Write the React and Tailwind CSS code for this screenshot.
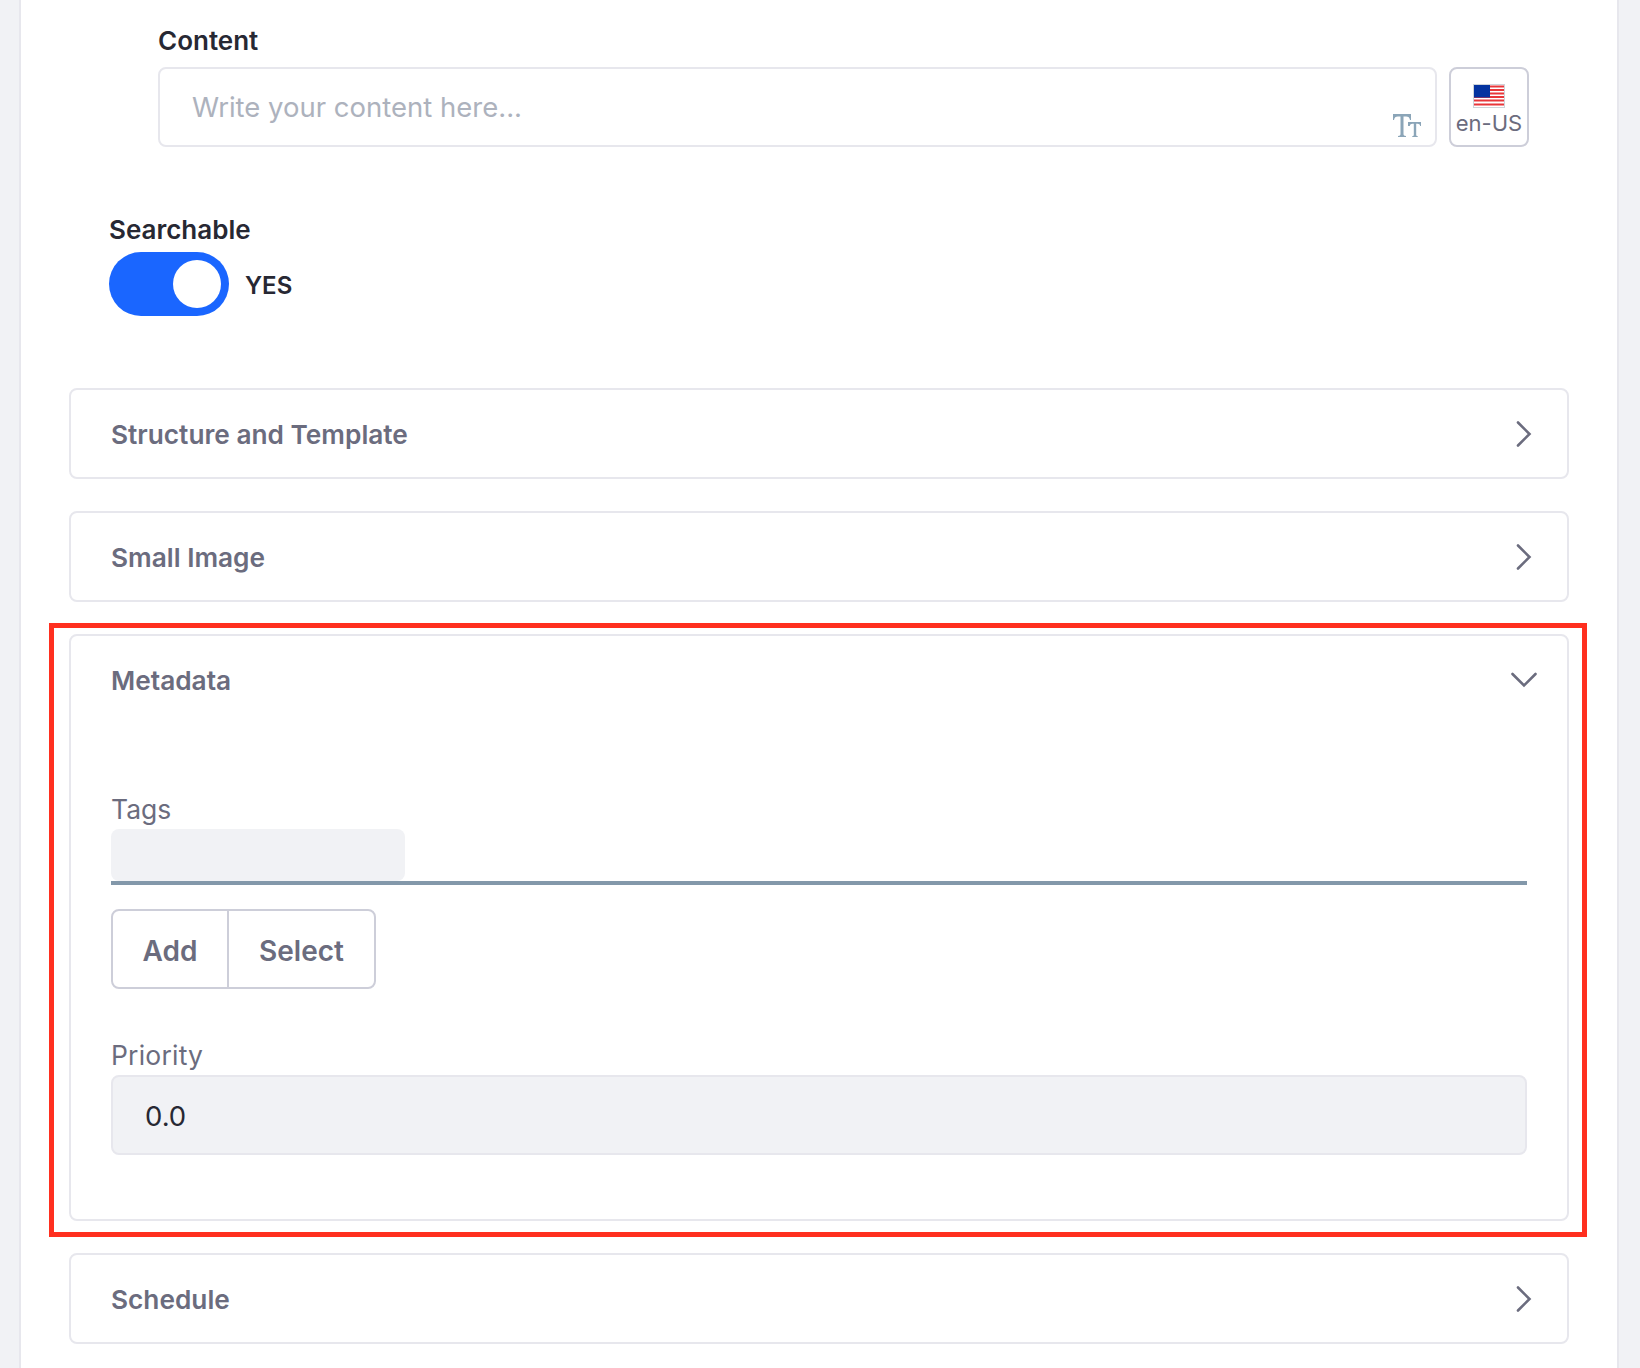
const Chevron = ({ down }) => (
  <svg width="28" height="28" viewBox="0 0 28 28" fill="none" stroke="#6b6c7e" strokeWidth="2.6" strokeLinecap="round" strokeLinejoin="miter">
    {down ? <path d="M2.500 8l11.500 11.500L25.500 8" /> : <path d="M8 2.500L19.500 14 8 25.500" />}
  </svg>
);

const Header = ({ title, down }) => (
  <div className="h-[87px] flex items-center justify-between pl-[40px] pr-[29px]">
    <span className="text-[26.25px] font-semibold text-[#6b6c7e] leading-[32px] mt-[3px]">{title}</span>
    <Chevron down={down} />
  </div>
);

const Panel = ({ title }) => (
  <div className="h-[91px] mb-[32px] border-2 border-[#e7e7ed] rounded-lg flex flex-col justify-center">
    <Header title={title} />
  </div>
);

const Flag = () => (
  <svg width="32" height="24" viewBox="0 0 32 24">
    <rect width="32" height="24" fill="#ced4da" />
    <rect x="1" y="1" width="30" height="22" fill="#fff" />
    <path d="M1 2.500h30M1 6h30M1 9.500h30M1 13h30M1 16.500h30M1 20.500h30" stroke="#e8363a" strokeWidth="1.800" />
    <rect x="1" y="1" width="16" height="12.500" fill="#0433a0" />
  </svg>
);

const TextSize = () => (
  <svg width="28" height="23" viewBox="0 0 28 23" fill="#8ba5b8" className="absolute right-[14px] bottom-[8px]">
    <path d="M0 0h18v6h-1c-.4-2.500-1.500-3.600-4-3.600h-2.500V20c0 1.300.6 1.800 2.500 2v1H5v-1c1.900-.2 2.500-.7 2.500-2V2.400H5C2.500 2.400 1.400 3.500 1 6H0z" />
    <path d="M15 8h13v4h-.8c-.3-1.500-1-2.300-2.700-2.300h-1.300V21c0 .7.400 1 1.600 1.200V23h-5.600v-.8c1.200-.2 1.600-.5 1.600-1.200V9.700h-1.300c-1.700 0-2.400.8-2.700 2.300H15z" />
  </svg>
);

export default function App() {
  return (
    <div className="w-[1640px] h-[1368px] overflow-hidden bg-[#f1f2f5] pl-[19px] font-['Inter',sans-serif]">
      <div className="w-[1600px] h-full bg-white border-x-2 border-[#e7e7ed]">
        <div className="pl-[137px] pt-[25px] pr-[88px]">
          <div className="text-[26px] font-semibold text-[#272833] leading-[32px] mb-[10px]">Content</div>
          <div className="flex gap-[12px]">
            <div className="relative flex-1 h-[80px] border-2 border-[#e7e7ed] rounded-lg flex items-center pl-[32px] pt-[2px] text-[27.5px] text-[#adb2bd]">
              Write your content here...
              <TextSize />
            </div>
            <div className="w-[80px] h-[80px] border-2 border-[#cdced9] rounded-lg flex flex-col items-center pt-[15px] text-[22px] leading-[30px] text-[#6b6c7e]">
              <Flag />
              <span>en-US</span>
            </div>
          </div>
        </div>

        <div className="pl-[88px] pt-[67px]">
          <div className="text-[26px] font-semibold text-[#272833] leading-[32px] mb-[6px]">Searchable</div>
          <div className="flex items-center gap-[16px]">
            <div className="w-[120px] h-[64px] rounded-full bg-[#1a66ff] flex items-center justify-end pr-[8px]">
              <div className="w-[48px] h-[48px] rounded-full bg-white" />
            </div>
            <span className="text-[24px] font-semibold text-[#272833] pt-[3px]">YES</span>
          </div>
        </div>

        <div className="relative mt-[72px] ml-[48px] w-[1500px]">
          <Panel title="Structure and Template" />
          <Panel title="Small Image" />

          <div className="h-[587px] mb-[32px] border-2 border-[#e7e7ed] rounded-lg">
            <Header title="Metadata" down />
            <div className="pl-[40px] pr-[40px]">
              <div className="mt-[70px] h-[32px] mb-[4px] leading-[32px] text-[26.5px] text-[#6b6c7e]">Tags</div>
              <div className="border-b-4 border-[#8398aa]">
                <div className="w-[294px] h-[52px] bg-[#f1f2f5] rounded-lg" />
              </div>
              <div className="mt-[24px] w-[265px] h-[80px] border-2 border-[#cdced9] rounded-lg flex text-[28px] font-semibold text-[#6b6c7e]">
                <div className="w-[116px] pt-[3px] border-r-2 border-[#cdced9] flex items-center justify-center">Add</div>
                <div className="flex-1 pt-[3px] flex items-center justify-center">Select</div>
              </div>
              <div className="mt-[50px] h-[32px] mb-[4px] leading-[32px] text-[26.5px] tracking-[0.2px] text-[#6b6c7e]">Priority</div>
              <div className="h-[80px] bg-[#f1f2f5] border-2 border-[#e7e7ed] rounded-lg flex items-center pl-[32px] pt-[3px] text-[27.5px] text-[#272833]">0.0</div>
            </div>
          </div>

          <Panel title="Schedule" />

          <div className="absolute left-[-20px] top-[235px] w-[1538px] h-[614px] border-[5px] border-[#ff2f1f] pointer-events-none" />
        </div>
      </div>
    </div>
  );
}
